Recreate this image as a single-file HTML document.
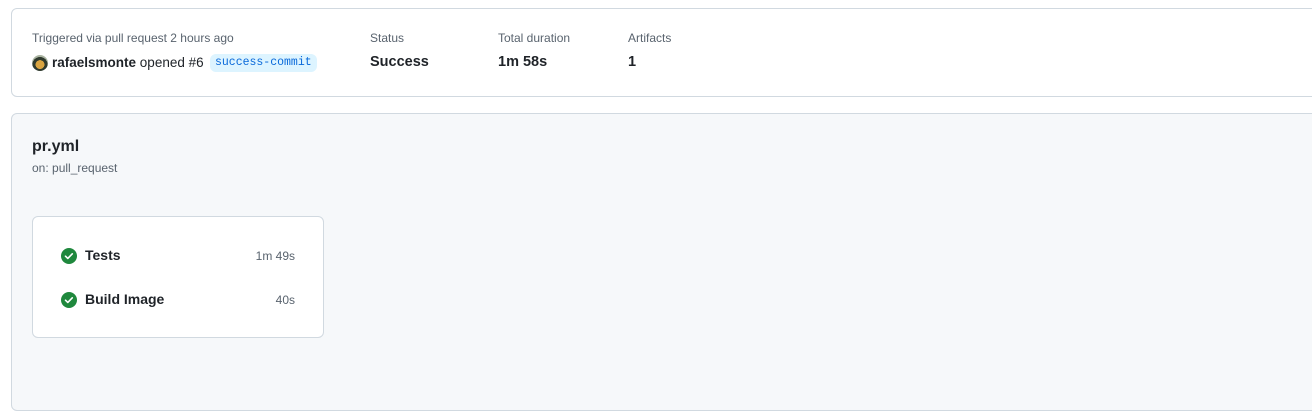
<!DOCTYPE html>
<html><head><meta charset="utf-8"><style>
body{margin:0;width:1312px;height:420px;background:#fff;font-family:"Liberation Sans",sans-serif;color:#1f2328;position:relative;overflow:hidden}
.a{position:absolute}
.card1{left:11px;top:8px;width:1320px;height:87px;border:1px solid #d1d9e0;border-radius:6px;background:#fff}
.card2{left:11px;top:113px;width:1320px;height:296px;border:1px solid #d1d9e0;border-radius:6px;background:#f6f8fa}
.lbl{font-size:12px;color:#59636e}
.val{font-size:14.5px;font-weight:bold}
.job{left:32px;top:216px;width:290px;height:120px;border:1px solid #d1d9e0;border-radius:6px;background:#fff}
.chk{width:16px;height:16px;border-radius:50%;background:#1f883d}
</style></head><body>
<div class="a card1"></div>
<div class="a card2"></div>
<div class="a lbl" style="left:32px;top:31px">Triggered via pull request 2 hours ago</div>
<div class="a" style="left:32px;top:55px;width:16px;height:16px;border-radius:50%;background:radial-gradient(circle at 50% 60%,#d9a441 0 35%,#2f3a2e 36% 60%,#a9b3a0 61%)"></div>
<div class="a" style="left:52px;top:55px;font-size:13.5px"><b>rafaelsmonte</b> opened #6</div>
<div class="a" style="left:210px;top:54px;height:18px;padding:0 5px;border-radius:6px;background:#ddf4ff;color:#0969da;font:11.5px/18px 'Liberation Mono',monospace">success-commit</div>
<div class="a lbl" style="left:370px;top:31px">Status</div>
<div class="a val" style="left:370px;top:54px">Success</div>
<div class="a lbl" style="left:498px;top:31px">Total duration</div>
<div class="a val" style="left:498px;top:54px">1m 58s</div>
<div class="a lbl" style="left:628px;top:31px">Artifacts</div>
<div class="a val" style="left:628px;top:54px">1</div>
<div class="a" style="left:32px;top:138px;font-size:16px;font-weight:bold">pr.yml</div>
<div class="a lbl" style="left:32px;top:161px">on: pull_request</div>
<div class="a job"></div>
<div class="a chk" style="left:61px;top:248px"><svg width="16" height="16"><path d="M4.5 8.2l2.3 2.2 4.5-4.6" stroke="#fff" stroke-width="1.6" fill="none" stroke-linecap="round" stroke-linejoin="round"/></svg></div>
<div class="a" style="left:85px;top:247px;font-size:14px;font-weight:bold">Tests</div>
<div class="a lbl" style="left:200px;width:95px;text-align:right;top:249px">1m 49s</div>
<div class="a chk" style="left:61px;top:292px"><svg width="16" height="16"><path d="M4.5 8.2l2.3 2.2 4.5-4.6" stroke="#fff" stroke-width="1.6" fill="none" stroke-linecap="round" stroke-linejoin="round"/></svg></div>
<div class="a" style="left:85px;top:291px;font-size:14px;font-weight:bold">Build Image</div>
<div class="a lbl" style="left:200px;width:95px;text-align:right;top:293px">40s</div>
</body></html>
